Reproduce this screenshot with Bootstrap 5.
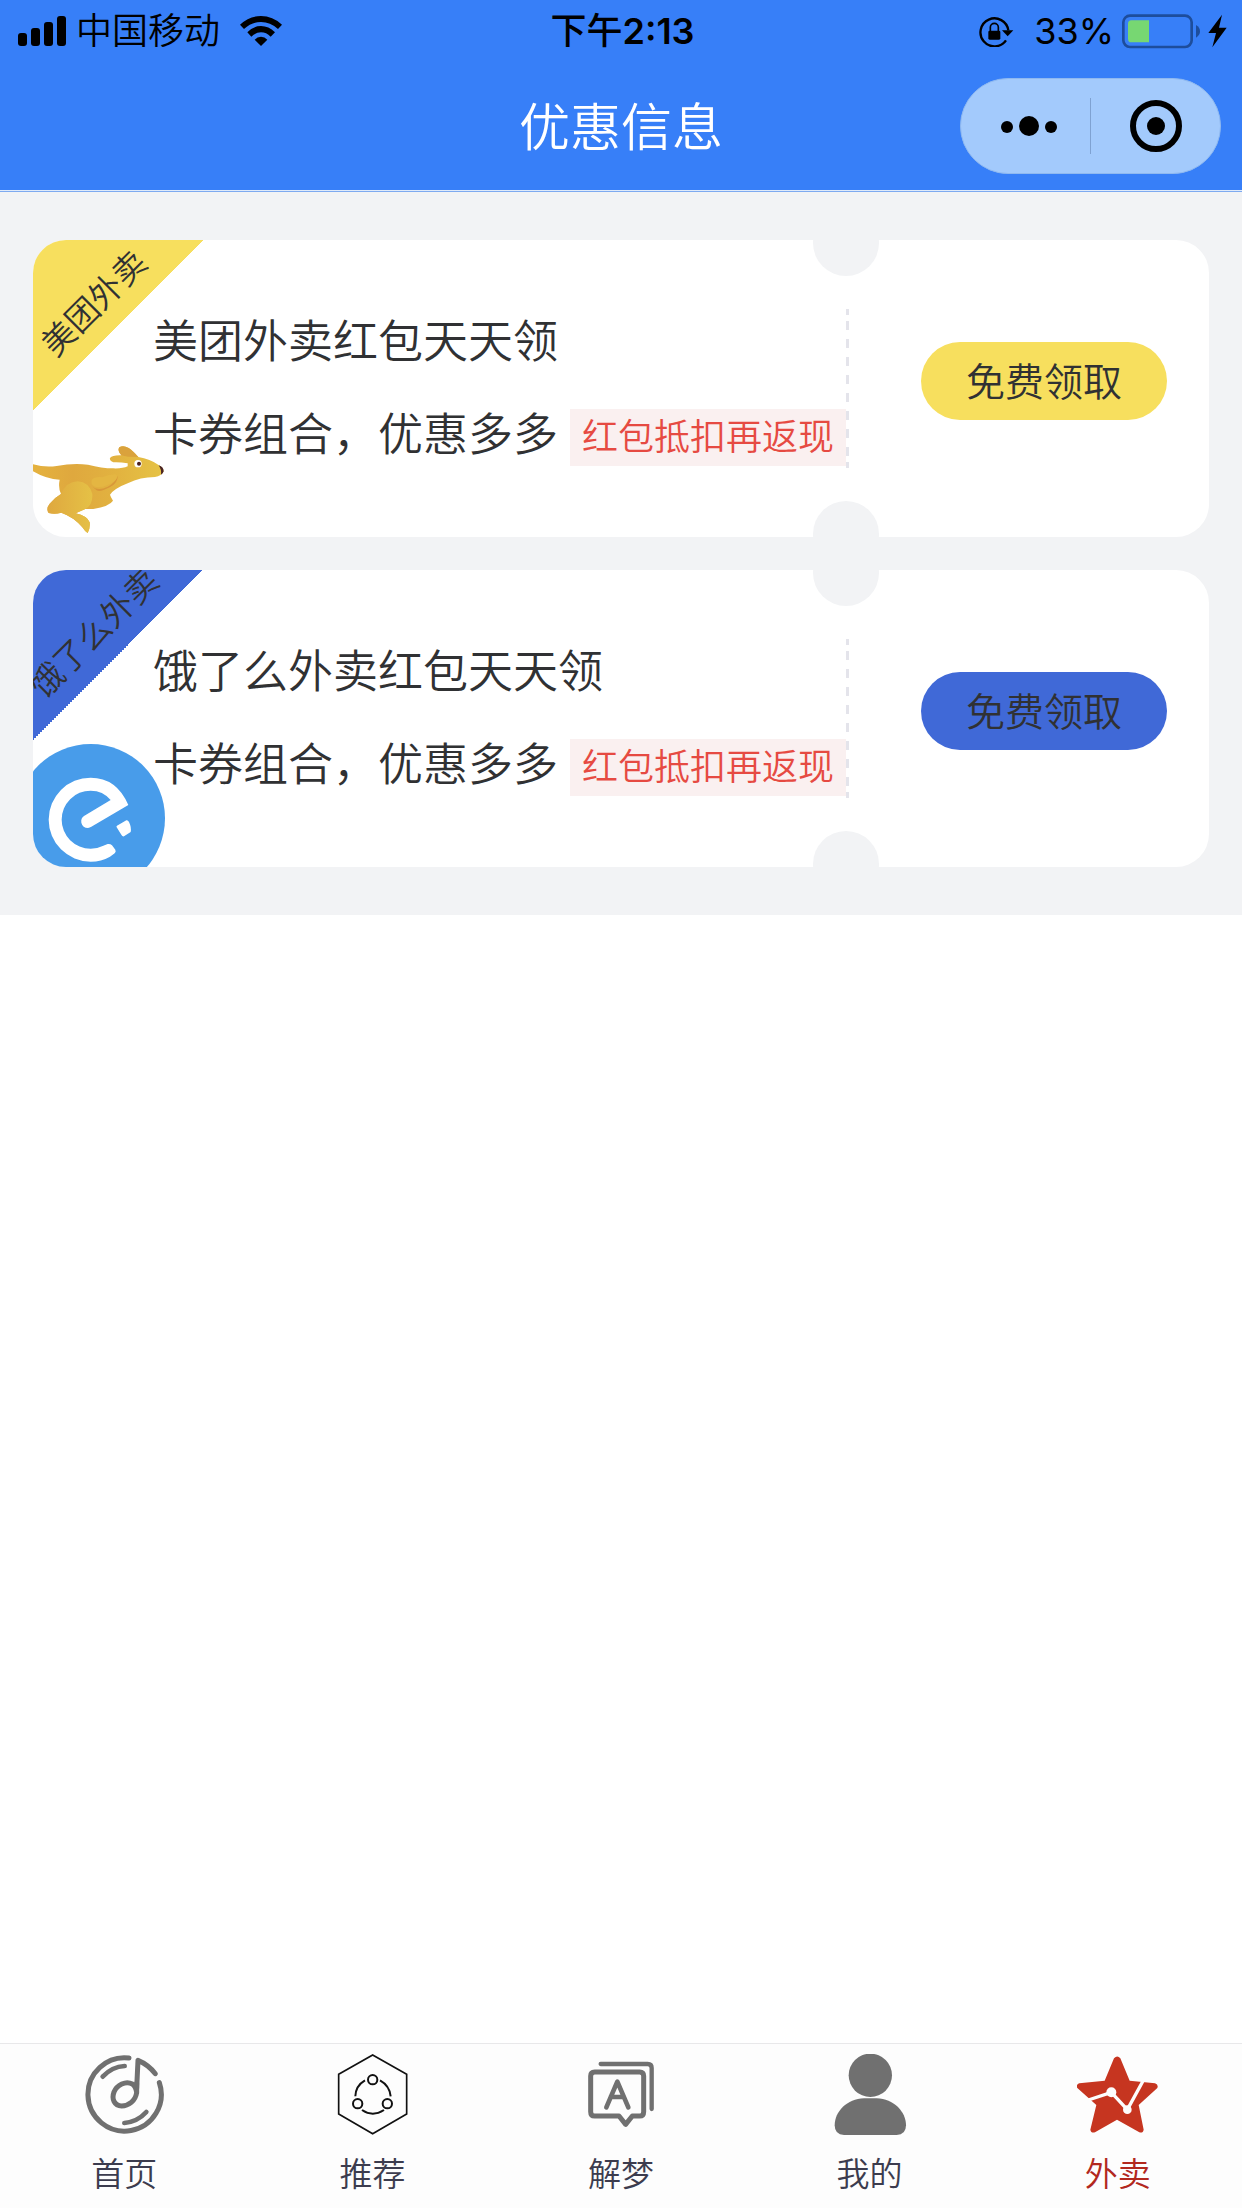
<!DOCTYPE html>
<html lang="zh-CN">
<head>
<meta charset="utf-8">
<meta name="viewport" content="width=device-width, initial-scale=1">
<title>优惠信息</title>
<link rel="stylesheet" href="https://cdn.jsdelivr.net/npm/bootstrap@5.3.0/dist/css/bootstrap.min.css">
<style>
  :root { --brand: #377ff8; --page: #f2f3f5; --ink: #303133; }
  body { font-family: Inter, "Noto Sans CJK SC", sans-serif; font-weight: 350; color: var(--ink); background: #fff; }
  svg { display: block; flex: none; }

  .app-header { background: var(--brand); border-bottom: 1px solid #dfeafa; }
  .status-bar { height: 62px; font-size: 36px; line-height: 48px; color: #000; padding: 0 15px 0 18px; }
  .carrier { gap: 10px; }
  .status-side { gap: 20px; }
  .clock-period { font-weight: 500; }
  .title-bar { height: 128px; padding: 0 21px; }
  .page-title { font-size: 51px; line-height: 60px; font-weight: 350; color: #fff; padding-top: 4px; }
  .capsule { width: 261px; height: 96px; background: #a3cafc; border: 1px solid #8fb9f0; }
  .capsule button { background: none; border: 0; padding: 0; }
  .capsule-line { width: 1px; height: 56px; background: #7fa2d2; }

  .offers { background: var(--page); border-top: 1px solid #7eaaf0; padding: 48px 33px; gap: 33px; }
  .coupon { background: #fff; border-radius: 33px; height: 297px; }
  .coupon-text { padding-left: 120px; gap: 33px; font-size: 45px; line-height: 60px; white-space: nowrap; }
  .coupon-text h2 { font-size: 45px; line-height: 60px; font-weight: 350; }
  .coupon-tag { background: #faf0f0; color: #e64a42; font-size: 36px; line-height: 57px; padding: 0 12px; margin: 4px 0 0 12px; }
  .coupon-action { padding: 0 42px 15px 75px; }
  .coupon-seam {
    position: absolute; left: 0; top: 69px; width: 3px; height: 159px;
    background:
      linear-gradient(#e4e4eb, #e4e4eb) top / 3px 6px no-repeat,
      linear-gradient(#e4e4eb, #e4e4eb) bottom / 3px 6px no-repeat,
      repeating-linear-gradient(#e4e4eb 0 9px, transparent 9px 18px) 0 12px / 3px 138px no-repeat;
  }
  .notch { position: absolute; left: -33px; width: 66px; height: 66px; border-radius: 50%; background: var(--page); }
  .notch-top { top: -30px; }
  .notch-bottom { bottom: -30px; }
  .claim-btn { --bs-btn-color: var(--ink); --bs-btn-hover-color: var(--ink); width: 246px; height: 78px; border: 0; padding: 2px 0 0; font-size: 39px; font-weight: 350; line-height: 48px; background: var(--theme) !important; }
  .corner { position: absolute; left: 0; top: 0; width: 170px; height: 170px; background: linear-gradient(135deg, var(--theme) 50%, transparent 50%); }
  .corner span { position: absolute; left: 61px; top: 63px; font-size: 33px; line-height: 42px; white-space: nowrap; transform: translate(-50%, -50%) rotate(-45deg); }
  .brand-art { position: absolute; left: 0; bottom: 0; }
  .theme-meituan { --theme: #f7df5e; }
  .theme-eleme { --theme: #4069d7; }

  .tab-bar { background: #fdfdfd; border-top: 1px solid #e8e8ea; height: 165px; }
  .tab-bar a { font-size: 33px; line-height: 42px; color: #3c3c4e; padding-top: 10px; gap: 18px; }
  .tab-bar a.active { color: #b2281e; }
</style>
<script src="https://cdn.jsdelivr.net/npm/bootstrap@5.3.0/dist/js/bootstrap.bundle.min.js"></script>
</head>
<body class="d-flex flex-column min-vh-100">

<header class="app-header">
  <div class="status-bar d-flex align-items-center text-nowrap">
    <div class="status-side col d-flex align-items-center">
      <div class="carrier d-flex align-items-center">
        <svg width="48" height="30" viewBox="54 45 144 90"><rect x="54" y="96" width="27" height="39" rx="9"/><rect x="93" y="81" width="27" height="54" rx="9"/><rect x="132" y="63" width="27" height="72" rx="9"/><rect x="171" y="45" width="27" height="90" rx="9"/></svg>
        <span>中国移动</span>
      </div>
      <svg width="42" height="30" viewBox="720 45 126 90"><path d="M720 71Q748 45 783 45T846 71L834 84Q811 63 783 63T732 84Z"/><path d="M742 94Q760 75 783 75T825 94L812 107Q799 94 783 94T754 107Z"/><path d="M764 116Q772 107 783 107T802 116L783 135Z"/></svg>
    </div>
    <div class="fw-semibold"><span class="clock-period">下午</span>2:13</div>
    <div class="status-side col d-flex align-items-center justify-content-end">
      <svg width="35" height="31" viewBox="188 43 105 93"><path d="M276 86A42 42 0 1 0 269 116" fill="none" stroke="#000" stroke-width="7"/><path d="M257 86H291L274 104Z"/><rect x="216" y="87" width="36" height="27" rx="4"/><path d="M222 88V77A12 12 0 0 1 246 77V88" fill="none" stroke="#000" stroke-width="5"/></svg>
      <div class="d-flex align-items-center gap-2">
        <span class="fw-normal">33%</span>
        <svg width="78" height="35" viewBox="606 38 234 105"><rect x="610" y="43" width="205" height="94" rx="20" fill="none" stroke="#1d4d9c" stroke-width="8"/><path d="M634 57H687V123H634Q624 123 624 112V68Q624 57 634 57Z" fill="#77d772"/><path d="M828 71Q840 78 840 90T828 109Z" fill="#1d4d9c"/></svg>
        <svg width="19" height="34" viewBox="865 41 57 102"><path d="M907 43L866 98H889L878 141L921 82H898Z"/></svg>
      </div>
    </div>
  </div>
  <div class="title-bar d-flex align-items-center">
    <div class="col"></div>
    <h1 class="page-title text-nowrap m-0">优惠信息</h1>
    <div class="col d-flex justify-content-end">
      <div class="capsule rounded-pill d-flex align-items-center">
        <button type="button" class="col h-100 d-flex align-items-center justify-content-center" aria-label="更多">
          <svg width="64" height="24" viewBox="0 0 64 24"><circle cx="13" cy="13" r="6"/><circle cx="35" cy="12" r="10"/><circle cx="57" cy="13" r="6"/></svg>
        </button>
        <span class="capsule-line"></span>
        <button type="button" class="col h-100 d-flex align-items-center justify-content-center" aria-label="关闭">
          <svg width="52" height="52" viewBox="0 0 52 52"><circle cx="26" cy="26" r="23" fill="none" stroke="#000" stroke-width="6"/><circle cx="26" cy="26" r="9"/></svg>
        </button>
      </div>
    </div>
  </div>
</header>

<main class="offers d-flex flex-column">
  <article class="coupon theme-meituan position-relative overflow-hidden d-flex">
    <svg class="brand-art" width="132" height="132" viewBox="39 555 396 396" aria-hidden="true">
      <defs>
        <linearGradient id="fur" x1="0" x2="1"><stop offset="0" stop-color="#e5b23f"/><stop offset=".3" stop-color="#dfa83e"/><stop offset=".65" stop-color="#e2b340"/><stop offset="1" stop-color="#e6c345"/></linearGradient>
        <linearGradient id="leg" x1="0" x2="1"><stop offset="0" stop-color="#dfa83f"/><stop offset="1" stop-color="#e5c146"/></linearGradient>
      </defs>
      <path fill="url(#fur)" d="M39 733Q75 743 110 738Q160 728 204 734Q245 745 280 745Q308 746 323 739V730Q300 726 280 727Q268 722 270 714Q277 705 304 706Q291 692 298 682Q309 674 326 684Q338 692 355 711Q390 716 417 736Q430 742 431 754Q425 768 405 771Q360 771 325 789Q283 805 270 824Q272 831 279 842Q268 859 220 867H196L167 880Q202 888 209 907Q211 925 203 939Q194 933 187 922Q163 892 124 878Q104 884 86 879Q77 866 89 851Q105 832 123 822Q114 803 119 779Q80 778 39 754Z"/>
      <path fill="url(#leg)" d="M123 822Q139 785 173 784Q207 786 217 822Q219 854 196 867L167 880Q202 888 209 907Q211 925 203 939Q194 933 187 922Q163 892 124 878Q104 884 86 879Q77 866 89 851Q105 832 123 822Z"/>
      <path fill="#d89739" d="M218 801Q236 813 263 800Q285 789 293 767Q294 789 269 802Q240 818 230 811Z"/>
      <path fill="#e4b642" d="M215 780Q225 769 247 772Q269 762 288 763Q296 770 285 782Q263 799 232 802Q211 800 215 780Z"/>
      <path fill="#daa23c" d="M298 682Q309 674 326 684Q338 692 355 711L324 710L304 706Q291 692 298 682Z"/>
      <circle cx="354" cy="731" r="11" fill="#fff"/><circle cx="357" cy="731" r="6" fill="#4a2020"/>
      <path fill="#4a2424" d="M416 736Q431 741 431 754Q429 761 423 764Q425 749 416 736Z"/>
    </svg>
    <div class="corner"><span>美团外卖</span></div>
    <div class="coupon-text flex-grow-1 d-flex flex-column justify-content-center">
      <h2 class="m-0">美团外卖红包天天领</h2>
      <div class="d-flex align-items-center"><span>卡券组合，优惠多多</span><span class="coupon-tag">红包抵扣再返现</span></div>
    </div>
    <div class="coupon-action position-relative d-flex align-items-center">
      <i class="notch notch-top"></i><i class="coupon-seam"></i><i class="notch notch-bottom"></i>
      <button type="button" class="btn claim-btn rounded-pill">免费领取</button>
    </div>
  </article>

  <article class="coupon theme-eleme position-relative overflow-hidden d-flex">
    <svg class="brand-art" width="132" height="132" viewBox="39 555 396 396" aria-hidden="true">
      <circle cx="212" cy="805" r="223" fill="#489cea"/>
      <path d="M325 765Q290 683 212 683A126 126 0 0 0 86 809A126 126 0 0 0 212 935Q244 935 270 920L284 910Q289 905 286 899L276 886Q271 881 263 882L250 887Q232 896 212 896A87 87 0 0 1 125 809A87 87 0 0 1 212 722Q249 722 272 750L192 798Q182 805 184 818Q188 834 204 834Q209 833 214 830Z" fill="#fff"/>
      <path d="M291 827L319 811Q324 810 327 816Q335 833 332 846L312 859Q307 860 304 854L290 832Q288 829 291 827Z" fill="#fff"/>
    </svg>
    <div class="corner"><span>饿了么外卖</span></div>
    <div class="coupon-text flex-grow-1 d-flex flex-column justify-content-center">
      <h2 class="m-0">饿了么外卖红包天天领</h2>
      <div class="d-flex align-items-center"><span>卡券组合，优惠多多</span><span class="coupon-tag">红包抵扣再返现</span></div>
    </div>
    <div class="coupon-action position-relative d-flex align-items-center">
      <i class="notch notch-top"></i><i class="coupon-seam"></i><i class="notch notch-bottom"></i>
      <button type="button" class="btn claim-btn rounded-pill">免费领取</button>
    </div>
  </article>
</main>

<nav class="tab-bar mt-auto d-flex" aria-label="主导航">
  <a href="#" class="col d-flex flex-column align-items-center text-decoration-none">
    <svg width="81" height="81" viewBox="251 72 243 243" fill="none" stroke="#707070" stroke-width="15" stroke-linecap="round" stroke-linejoin="round"><path d="M386 84A110 110 0 1 0 477 158"/><path d="M307 140Q335 110 373 108M372 279Q412 275 438 246" stroke-width="14"/><path d="M465 131Q444 104 413 91L409 175"/><path d="M409 160V188C405 213 385 228 364 228C342 227 333 207 341 186C350 165 376 151 396 162Q407 170 409 188"/></svg>
    <span>首页</span></a>
  <a href="#" class="col d-flex flex-column align-items-center text-decoration-none">
    <svg width="81" height="81" viewBox="996 72 243 243" fill="none" stroke="#111" stroke-width="6"><path d="M1118 75L1220 133V252L1118 311L1016 252V133Z" stroke-width="5"/><circle cx="1118" cy="149" r="14"/><circle cx="1073" cy="221" r="14"/><circle cx="1162" cy="221" r="14"/><path d="M1095 151Q1067 167 1066 199M1140 151Q1169 167 1172 199M1086 240Q1118 262 1152 240"/></svg>
    <span>推荐</span></a>
  <a href="#" class="col d-flex flex-column align-items-center text-decoration-none">
    <svg width="81" height="81" viewBox="482 72 243 243" fill="none" stroke="#707070" stroke-width="15" stroke-linecap="round" stroke-linejoin="round"><path d="M523 126H658Q670 126 670 138V245Q670 258 658 258H636L616 283L596 258H523Q511 258 511 245V138Q511 126 523 126Z"/><path d="M541 102H682Q694 102 694 114V237" stroke-width="13"/><path d="M558 232L591 155L624 232M571 201H611" stroke-width="14"/></svg>
    <span>解梦</span></a>
  <a href="#" class="col d-flex flex-column align-items-center text-decoration-none">
    <svg width="81" height="81" viewBox="21 72 243 243" fill="#707070"><circle cx="145" cy="136" r="65"/><path d="M126 205H164C215 207 252 245 252 286Q252 314 224 315H66Q38 314 38 286C38 245 75 207 126 205Z"/></svg>
    <span>我的</span></a>
  <a href="#" class="active col d-flex flex-column align-items-center text-decoration-none" aria-current="page">
    <svg width="81" height="81" viewBox="766 72 243 243"><path fill="#c63520" d="M877 85Q887 74 896 85L924 152L1000 160Q1011 164 1007 174L951 225L966 299Q964 310 953 307L886 269L820 307Q808 310 806 299L824 225L767 174Q762 164 773 160L849 152Z"/><path d="M800 210L869 187L917 239L964 153" fill="none" stroke="#fdfdfd" stroke-width="10"/><circle cx="869" cy="187" r="15" fill="#fdfdfd"/><circle cx="917" cy="239" r="13" fill="#fdfdfd"/></svg>
    <span>外卖</span></a>
</nav>
</body>
</html>
